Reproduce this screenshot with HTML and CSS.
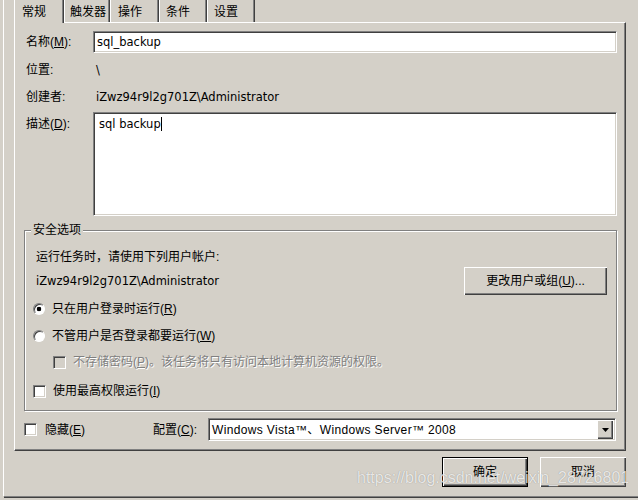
FILE: index.html
```html
<!DOCTYPE html>
<html lang="zh-CN">
<head>
<meta charset="utf-8">
<title>sql_backup 属性</title>
<link rel="stylesheet" href="styles.css">
</head>
<body>
<div class="screen">
  <div class="edge"></div>
  <div class="dialog">
    <div class="tabs">
      <div class="tab active t1">常规</div>
      <div class="tab t2">触发器</div>
      <div class="tab t3">操作</div>
      <div class="tab t4">条件</div>
      <div class="tab t5">设置</div>
    </div>
    <div class="panel">
      <div class="row r-name">
        <span class="lbl">名称(<u>M</u>):</span>
        <div class="field"><span class="lat">sql_backup</span></div>
      </div>
      <div class="row r-loc">
        <span class="lbl">位置:</span>
        <span class="val lat">\</span>
      </div>
      <div class="row r-author">
        <span class="lbl">创建者:</span>
        <span class="val lat">iZwz94r9l2g701Z\Administrator</span>
      </div>
      <div class="row r-desc">
        <span class="lbl">描述(<u>D</u>):</span>
        <div class="field area"><span class="lat">sql backup</span><span class="caret"></span></div>
      </div>
      <div class="group">
        <span class="legend">安全选项</span>
        <div class="g-line">运行任务时，请使用下列用户帐户:</div>
        <div class="g-user">
          <span class="lat">iZwz94r9l2g701Z\Administrator</span>
          <button class="btn btn-change">更改用户或组(<u>U</u>)...</button>
        </div>
        <div class="opt o1"><span class="radio on"></span>只在用户登录时运行(<u>R</u>)</div>
        <div class="opt o2"><span class="radio"></span>不管用户是否登录都要运行(<u>W</u>)</div>
        <div class="opt o3 disabled"><span class="check dis"></span>不存储密码(<u>P</u>)。该任务将只有访问本地计算机资源的权限。</div>
        <div class="opt o4"><span class="check"></span>使用最高权限运行(<u>I</u>)</div>
      </div>
      <div class="bottom">
        <div class="hide"><span class="check"></span>隐藏(<u>E</u>)</div>
        <span class="cfg-label">配置(<u>C</u>):</span>
        <div class="combo">
          <span class="combo-text">Windows Vista™、Windows Server™ 2008</span>
          <span class="drop"><svg width="7" height="4" viewBox="0 0 7 4"><path d="M0 0H7L3.5 4Z" fill="#000"/></svg></span>
        </div>
      </div>
    </div>
    <div class="actions">
      <button class="btn default">确定</button>
      <button class="btn">取消</button>
    </div>
  </div>
  <div class="watermark">https://blog.csdn.net/weixin_28726801</div>
</div>
</body>
</html>
```
FILE: styles.css
```css
html, body {
  margin: 0;
  padding: 0;
}
body {
  background: #d4d0c8;
  color: #000;
  font-family: "Liberation Sans", "Noto Sans CJK SC", sans-serif;
  font-size: 12px;
  line-height: 14px;
}
u {
  text-decoration: underline;
  text-underline-offset: 1px;
}
.lat {
  font-family: "DejaVu Sans", "Noto Sans CJK SC", sans-serif;
  font-size: 11.5px;
}
.screen {
  position: relative;
  width: 638px;
  height: 500px;
  display: flex;
  overflow: hidden;
}
.edge {
  width: 3px;
  height: 496px;
  border-right: 1px solid #fff;
  background: #d4d0c8;
}
.dialog {
  flex: 1;
  height: 498px;
  box-sizing: border-box;
  padding-left: 10px;
  border-bottom: 1px solid #404040;
  box-shadow: inset 0 -1px #808080;
}

/* tabs */
.tabs {
  display: flex;
  height: 22px;
}
.tab {
  height: 22px;
  box-sizing: border-box;
  padding-top: 5px;
  border-left: 1px solid #fff;
  border-right: 1px solid #404040;
  box-shadow: inset -1px 0 #808080;
  white-space: nowrap;
}
.tab.active {
  height: 23px;
  margin-bottom: -1px;
  position: relative;
  z-index: 1;
  background: #d4d0c8;
}
.t1 { width: 50px; padding-left: 7px; }
.t2 { width: 46px; padding-left: 5px; }
.t3 { width: 49px; padding-left: 7px; }
.t4 { width: 48px; padding-left: 6px; }
.t5 { width: 48px; padding-left: 6px; }

/* panel */
.panel {
  width: 612px;
  height: 429px;
  box-sizing: border-box;
  padding: 8px 8px 9px 11px;
  border-top: 1px solid #fff;
  border-left: 1px solid #fff;
  border-right: 1px solid #404040;
  border-bottom: 1px solid #404040;
  box-shadow: inset -1px -1px #808080;
}
.row {
  display: flex;
  align-items: center;
  height: 22px;
}
.lbl {
  width: 67px;
  flex: none;
  white-space: nowrap;
}
.val {
  padding-left: 3px;
}
.field {
  flex: 1;
  height: 22px;
  box-sizing: border-box;
  background: #fff;
  border: 1px solid;
  border-color: #808080 #fff #fff #808080;
  box-shadow: inset 1px 1px #404040, inset -1px -1px #d4d0c8;
  padding: 3px 3px 0 3px;
  white-space: nowrap;
}
.r-loc { margin-top: 6px; }
.r-author { margin-top: 5px; }
.r-desc {
  margin-top: 4px;
  height: 104px;
  align-items: flex-start;
}
.r-desc .lbl { padding-top: 5px; }
.field.area {
  height: 104px;
  padding: 4px 4px 0 5px;
}
.caret {
  display: inline-block;
  width: 1px;
  height: 14px;
  background: #000;
  vertical-align: top;
}

/* security group */
.group {
  position: relative;
  margin: 14px 0 0 -2px;
  border: 1px solid #808080;
  box-shadow: inset 1px 1px #fff, 1px 1px #fff;
  padding: 19px 8px 11px 11px;
}
.legend {
  position: absolute;
  top: -8px;
  left: 6px;
  padding: 0 2px;
  line-height: 15px;
  background: #d4d0c8;
}
.g-line {
  height: 14px;
}
.g-user {
  display: flex;
  align-items: center;
  justify-content: space-between;
  height: 28px;
  margin-top: 3px;
}
.opt {
  display: flex;
  align-items: center;
  height: 16px;
  white-space: nowrap;
}
.o1 { margin-top: 6px; }
.o2 { margin-top: 11px; }
.o3 { margin-top: 10px; }
.o4 { margin-top: 13px; }
.disabled {
  color: #808080;
  text-shadow: 1px 1px #fff;
}
.radio {
  flex: none;
  width: 12px;
  height: 12px;
  box-sizing: border-box;
  margin: 0 7px 0 -3px;
  border-radius: 50%;
  border: 1px solid;
  border-color: #808080 #fff #fff #808080;
  box-shadow: inset 1px 1px #404040;
  background: #fff;
}
.radio.on {
  background: radial-gradient(circle, #000 0 2px, #fff 2.6px);
}
.check {
  flex: none;
  width: 13px;
  height: 13px;
  box-sizing: border-box;
  border: 1px solid;
  border-color: #808080 #fff #fff #808080;
  box-shadow: inset 1px 1px #404040, inset -1px -1px #d4d0c8;
  background: #fff;
  margin-right: 7px;
}
.check.dis {
  background: #d4d0c8;
}
.o3 .check { margin-left: 17px; }
.o4 .check { margin-left: -3px; }

/* buttons */
.btn {
  font: inherit;
  color: #000;
  background: #d4d0c8;
  border: none;
  padding: 0;
  box-sizing: border-box;
  box-shadow: inset 1px 1px #fff, inset -1px -1px #404040, inset -2px -2px #808080;
  white-space: nowrap;
}
.btn-change {
  width: 143px;
  height: 28px;
  margin-right: 1px;
}
.btn.default {
  border: 1px solid #000;
}

/* bottom row */
.bottom {
  display: flex;
  align-items: center;
  height: 23px;
  margin-top: 7px;
}
.hide {
  display: flex;
  align-items: center;
  width: 127px;
  flex: none;
}
.hide .check {
  margin-left: -2px;
  margin-right: 8px;
}
.cfg-label {
  width: 55px;
  flex: none;
  white-space: nowrap;
}
.combo {
  flex: 1;
  display: flex;
  align-items: center;
  height: 23px;
  box-sizing: border-box;
  background: #fff;
  border: 1px solid;
  border-color: #808080 #fff #fff #808080;
  box-shadow: inset 1px 1px #404040, inset -1px -1px #d4d0c8;
  padding: 2px;
  margin-right: 1px;
}
.combo-text {
  flex: 1;
  padding-left: 1px;
  letter-spacing: 0.35px;
  white-space: nowrap;
}
.drop {
  width: 16px;
  height: 19px;
  box-sizing: border-box;
  display: flex;
  align-items: center;
  justify-content: center;
  background: #d4d0c8;
  box-shadow: inset 1px 1px #fff, inset -1px -1px #404040, inset -2px -2px #808080;
}

/* dialog buttons */
.actions {
  display: flex;
  justify-content: flex-end;
  gap: 12px;
  margin-top: 6px;
  padding-right: 12px;
}
.actions .btn {
  width: 86px;
  height: 30px;
}

.watermark {
  position: absolute;
  left: 357px;
  top: 468px;
  font-family: "Liberation Sans", sans-serif;
  font-size: 16px;
  line-height: 20px;
  color: rgba(255, 255, 255, 0.78);
  text-shadow: 0 0 1px rgba(0, 0, 0, 0.35);
  white-space: nowrap;
}
```
